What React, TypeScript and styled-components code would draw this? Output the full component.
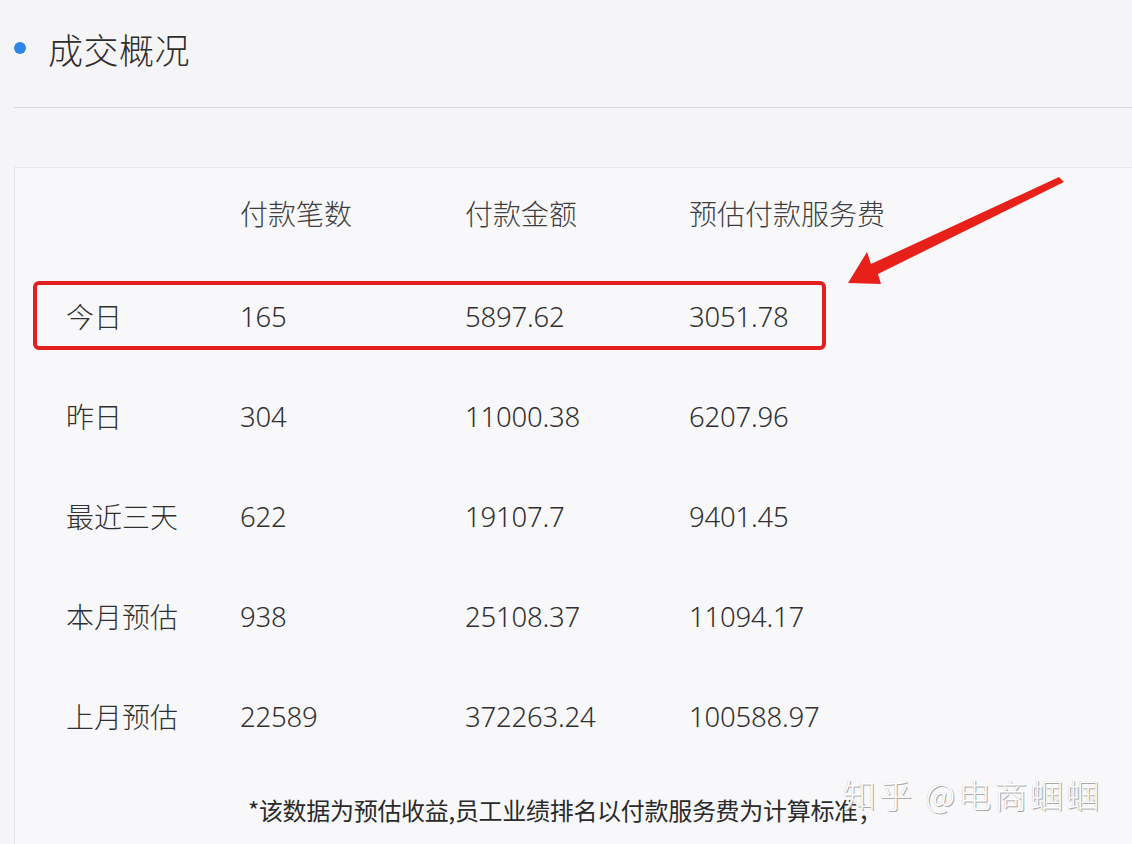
import React from "react";
import styled, { createGlobalStyle } from "styled-components";

const Global = createGlobalStyle`
  html, body { margin: 0; padding: 0; background: #f5f5f8; }
  body { font-family: "Noto Sans CJK SC", "Noto Sans", sans-serif; color: #343434; }
`;

const Page = styled.div`
  position: relative;
  width: 1132px;
  height: 844px;
  overflow: hidden;
  padding-left: 14px;
  box-sizing: border-box;
`;

const TitleRow = styled.div`
  display: flex;
  align-items: center;
  gap: 22px;
  height: 96px;
`;

const Bullet = styled.span`
  width: 12px;
  height: 12px;
  border-radius: 50%;
  background: #2d86e6;
`;

const Title = styled.h1`
  margin: 0;
  font-size: 35px;
  font-weight: 300;
  color: #2e2e2e;
  letter-spacing: 0.5px;
`;

const Divider = styled.div`
  margin-top: 11px;
  height: 1px;
  background: #d9d9dc;
`;

const Panel = styled.div`
  position: relative;
  margin-top: 59px;
  border-top: 1px solid #e6e6e9;
  border-left: 1px solid #e6e6e9;
  background: #f8f8fa;
  height: 700px;
  padding-left: 51px;
`;

const Row = styled.div<{ $head?: boolean }>`
  position: relative;
  display: grid;
  grid-template-columns: 174px 225px 224px auto;
  align-items: center;
  height: ${(p) => (p.$head ? "90px" : "100px")};
  padding-bottom: ${(p) => (p.$head ? "8px" : "0")};
  font-size: ${(p) => (p.$head ? "28px" : "27px")};
  font-weight: 300;
  color: ${(p) => (p.$head ? "#3e3e3e" : "#303030")};
`;

const Label = styled.span`
  font-size: 28px;
`;

const Num = styled.span`
  font-family: "Noto Sans", "Noto Sans CJK SC", sans-serif;
  font-size: 27.5px;
  font-weight: 300;
  letter-spacing: -0.2px;
`;

const Highlight = styled.div`
  position: absolute;
  left: -33px;
  top: 15px;
  width: 793px;
  height: 69px;
  box-sizing: border-box;
  border: 4px solid #e2201f;
  border-radius: 6px;
  pointer-events: none;
`;

const Note = styled.div`
  margin-top: 26px;
  padding-left: 182px;
  font-size: 24px;
  color: #2a2a2a;
  letter-spacing: -0.3px;
`;

const Watermark = styled.div`
  position: absolute;
  left: 843px;
  top: 770px;
  font-size: 33px;
  font-weight: 300;
  letter-spacing: 3px;
  color: #ffffff;
  text-shadow: 1px 1px 0 #a8a8a8, -0.5px -0.5px 0 #d0d0d0;
`;

const Arrow = styled.svg`
  position: absolute;
  left: 0;
  top: 0;
  pointer-events: none;
`;

const rows = [
  ["今日", "165", "5897.62", "3051.78"],
  ["昨日", "304", "11000.38", "6207.96"],
  ["最近三天", "622", "19107.7", "9401.45"],
  ["本月预估", "938", "25108.37", "11094.17"],
  ["上月预估", "22589", "372263.24", "100588.97"],
];

export default function App() {
  return (
    <>
      <Global />
      <Page>
        <TitleRow>
          <Bullet />
          <Title>成交概况</Title>
        </TitleRow>
        <Divider />
        <Panel>
          <Row $head>
            <span />
            <span>付款笔数</span>
            <span>付款金额</span>
            <span>预估付款服务费</span>
          </Row>
          {rows.map((r, i) => (
            <Row key={r[0]}>
              <Label>{r[0]}</Label>
              <Num>{r[1]}</Num>
              <Num>{r[2]}</Num>
              <Num>{r[3]}</Num>
              {i === 0 && <Highlight />}
            </Row>
          ))}
          <Note>*该数据为预估收益,员工业绩排名以付款服务费为计算标准；</Note>
        </Panel>
        <Watermark>知乎 @电商蝈蝈</Watermark>
        <Arrow width="1132" height="844" viewBox="0 0 1132 844">
          <polygon
            points="1059,177 1064,182 878,274 881,284 848,283 867,252 871,264"
            fill="#e8201a"
          />
        </Arrow>
      </Page>
    </>
  );
}
